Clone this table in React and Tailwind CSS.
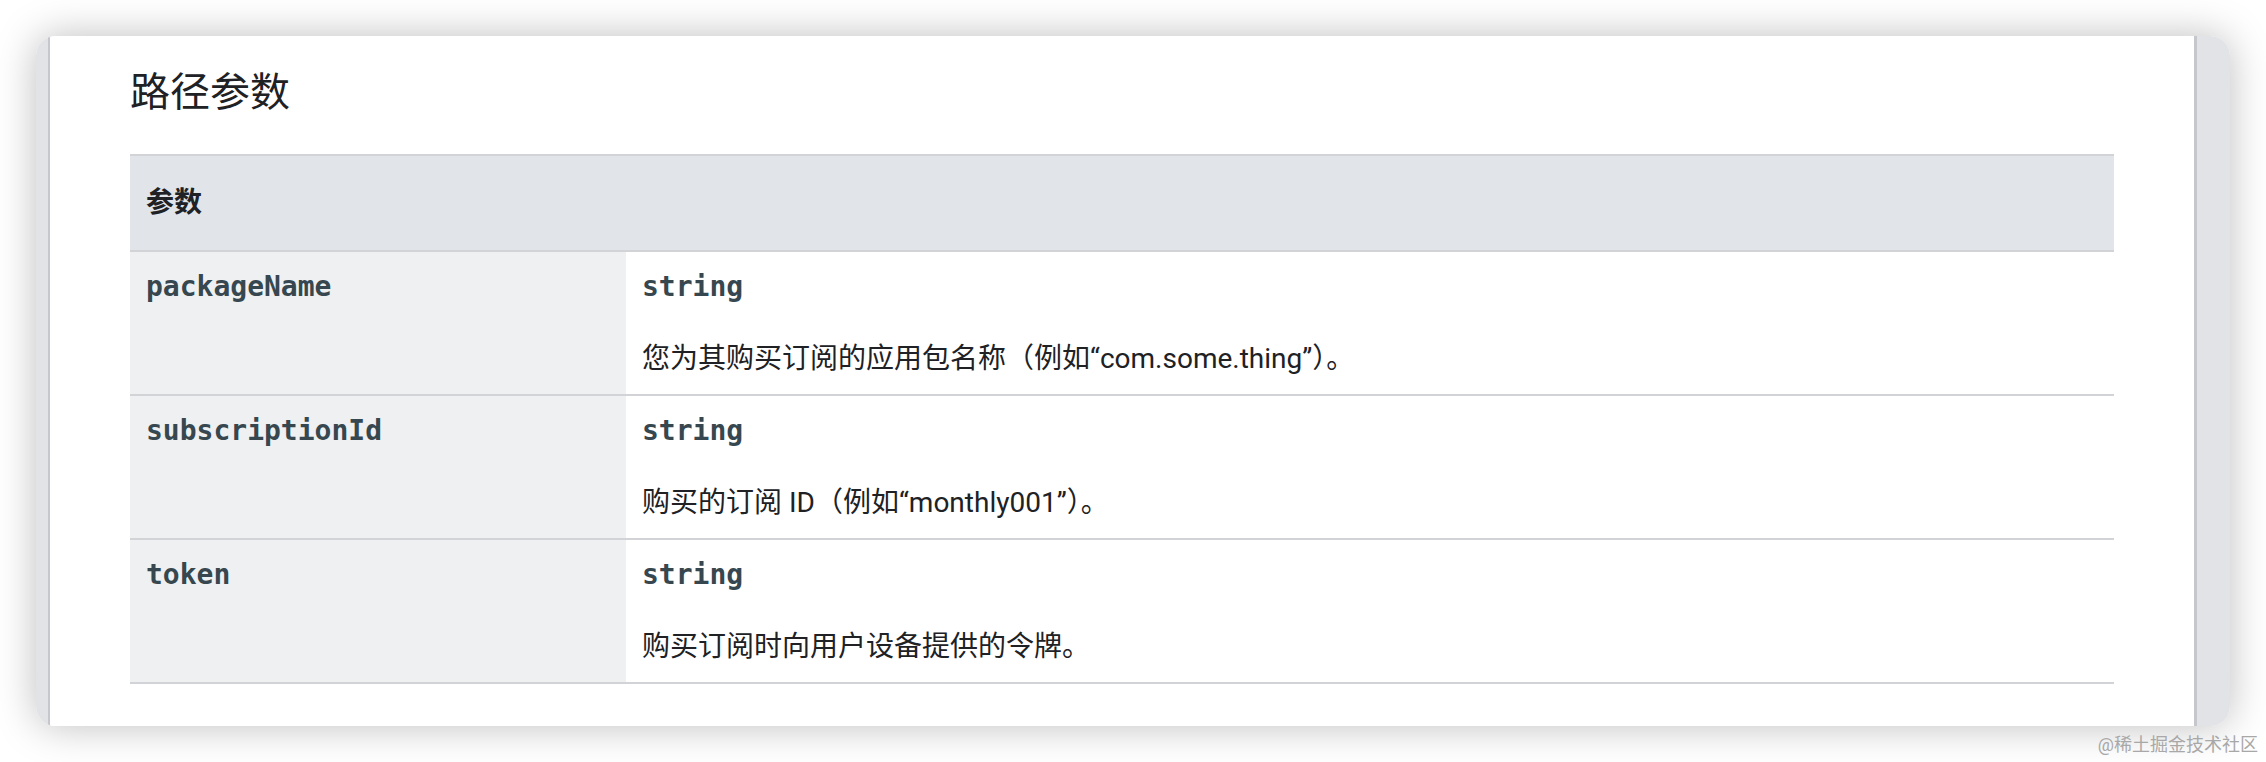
export default function App() {
  const rows = [
    {
      name: "packageName",
      desc: "您为其购买订阅的应用包名称（例如“com.some.thing”）。",
    },
    {
      name: "subscriptionId",
      desc: "购买的订阅 ID（例如“monthly001”）。",
    },
    {
      name: "token",
      desc: "购买订阅时向用户设备提供的令牌。",
    },
  ];
  const sans = "font-['Roboto','Noto_Sans_CJK_SC',sans-serif]";
  return (
    <div className="relative w-[2266px] h-[762px] bg-white p-[36px] overflow-hidden">
      <div className="flex h-[690px] w-[2194px] rounded-[20px] overflow-hidden shadow-[0_0_40px_rgba(0,0,0,0.26)]">
        <div className="w-[14px] bg-[#e1e3e6] border-r-2 border-[#c5c7cc]" />
        <div className="flex-1 bg-white px-[80px] pt-[33px]">
          <h2 className={`${sans} text-[40px] leading-[48px] text-[#202124] font-normal`}>
            路径参数
          </h2>
          <div className="mt-[37px] border-t-2 border-[#d1d3d7]">
            <div className="h-[96px] flex items-center bg-[#e1e4e8] border-b-2 border-[#d1d3d7] px-[16px]">
              <span className={`${sans} text-[28px] leading-[42px] font-bold text-[#202124]`}>参数</span>
            </div>
            {rows.map((r) => (
              <div key={r.name} className="grid grid-cols-[496px_1fr] border-b-2 border-[#d1d3d7]">
                <div className="bg-[#eef0f2] px-[16px] pt-[14px]">
                  <span className="font-['DejaVu_Sans_Mono',monospace] text-[28px] leading-[42px] font-bold text-[#37474f]">
                    {r.name}
                  </span>
                </div>
                <div className="px-[16px] pt-[14px] pb-[14px]">
                  <div className="font-['DejaVu_Sans_Mono',monospace] text-[28px] leading-[42px] font-bold text-[#37474f]">
                    string
                  </div>
                  <div className={`${sans} mt-[30px] text-[28px] leading-[42px] text-[#202124]`}>
                    {r.desc}
                  </div>
                </div>
              </div>
            ))}
          </div>
        </div>
        <div className="w-[36px] bg-[#e1e3e6] border-l-[3px] border-[#c5c7cc]" />
      </div>
      <div className={`absolute right-[8px] top-[733px] ${sans} text-[18px] leading-[24px] text-[#a8a8a8]`}>
        @稀土掘金技术社区
      </div>
    </div>
  );
}
